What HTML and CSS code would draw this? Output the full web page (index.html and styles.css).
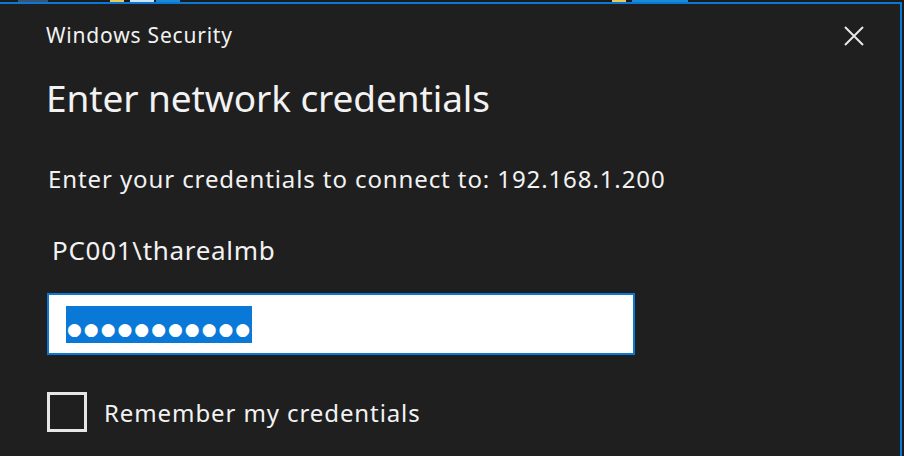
FILE: index.html
```html
<!DOCTYPE html>
<html lang="en">
  <head>
    <meta charset="UTF-8" />
    <title>Windows Security</title>
    <link rel="stylesheet" href="styles.css">
  </head>
  <body>
    <div class="taskbar">
      <span class="tb gap1"></span>
      <span class="tb grey"></span>
      <span class="tb gap2"></span>
      <span class="tb yellow"></span>
      <span class="tb light"></span>
      <span class="tb blue"></span>
      <span class="tb gap3"></span>
      <span class="tb yellow"></span>
      <span class="tb blue wide"></span>
    </div>
    <div class="dialog">
      <div class="title-row">
        <span class="app-name">Windows Security</span>
        <svg class="close" width="20" height="20" viewBox="0 0 20 20">
          <path d="M1 1 L19 19 M19 1 L1 19" stroke="#e8e8e8" stroke-width="2" fill="none" />
        </svg>
      </div>
      <h1>Enter network credentials</h1>
      <p class="target">Enter your credentials to connect to: 192.168.1.200</p>
      <p class="user">PC001\tharealmb</p>
      <div class="field">
        <span class="selected">●●●●●●●●●●●</span>
      </div>
      <label class="remember">
        <span class="box"></span>
        <span>Remember my credentials</span>
      </label>
    </div>
  </body>
</html>
```

FILE: styles.css
```css
* {
  box-sizing: border-box;
  margin: 0;
  padding: 0;
}
body {
  font-family: "Noto Sans", "Open Sans", sans-serif;
  background: #1b1b1b;
  color: #f2f2f2;
  width: 904px;
  height: 456px;
  overflow: hidden;
}
.taskbar {
  display: flex;
  height: 2px;
}
.tb.gap1 { width: 18px; }
.tb.grey { width: 30px; background: #3b5570; }
.tb.gap2 { width: 62px; }
.tb.yellow { width: 14px; background: #e8c95a; }
.tb.light { width: 24px; margin-left: 6px; background: #cfe6f7; }
.tb.blue { width: 24px; margin-left: 2px; background: #1a8ad8; }
.tb.gap3 { width: 432px; }
.tb.wide { width: 56px; margin-left: 6px; }
.dialog {
  width: 902px;
  height: 454px;
  background: #1f1f1f;
  border-top: 2px solid #0a78d7;
  border-right: 2px solid #0a78d7;
  padding: 0 0 0 46px;
}
.title-row {
  display: flex;
  align-items: center;
  justify-content: space-between;
  height: 64px;
  padding-right: 36px;
}
.app-name {
  font-size: 21px;
  letter-spacing: 0.8px;
  margin-top: -2px;
}
.close {
  display: block;
  margin-top: -1px;
}
h1 {
  font-weight: normal;
  font-size: 37px;
  line-height: 50px;
  margin-top: 5px;
  letter-spacing: -0.1px;
}
.target {
  font-size: 24px;
  letter-spacing: 0.9px;
  line-height: 30px;
  margin-top: 41px;
  margin-left: 2px;
}
.user {
  font-size: 26px;
  letter-spacing: 0.7px;
  line-height: 30px;
  margin-top: 41px;
  margin-left: 6px;
}
.field {
  width: 588px;
  height: 62px;
  margin-top: 28px;
  margin-left: 1px;
  border: 2px solid #0a78d7;
  background: #fff;
  display: flex;
  align-items: center;
  padding-left: 17px;
}
.selected {
  background: #0a78d7;
  color: #fff;
  font-family: "DejaVu Sans", sans-serif;
  font-size: 17px;
  letter-spacing: 2px;
  height: 37px;
  padding: 0 0 4px 1px;
  display: flex;
  align-items: flex-end;
}
.remember {
  display: flex;
  align-items: center;
  gap: 17px;
  margin-top: 37px;
  margin-left: 1px;
  font-size: 24px;
  letter-spacing: 0.9px;
}
.box {
  width: 40px;
  height: 40px;
  border: 3px solid #e6e6e6;
}
```
